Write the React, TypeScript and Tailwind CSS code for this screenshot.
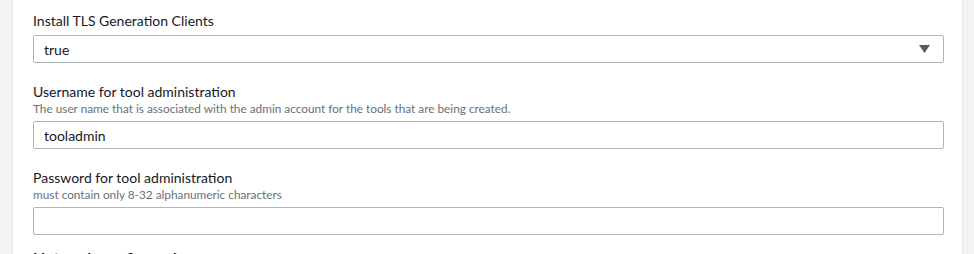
import React from 'react';

const fields = [
    {
        label: 'Username for tool administration',
        description:
            'The user name that is associated with the admin account for the tools that are being created.',
        value: 'tooladmin',
    },
    {
        label: 'Password for tool administration',
        description: 'must contain only 8-32 alphanumeric characters',
        value: '',
    },
];

export default function App() {
    return (
        <div
            className="flex h-[254px] w-full overflow-hidden bg-[#f2f3f3] text-[#16191f]"
            style={{ fontFamily: 'Lato, "Liberation Sans", Arial, sans-serif' }}
        >
            <div className="w-[12px] shrink-0" />
            <div className="flex w-[951px] shrink-0 flex-col border-x border-[#e4e7e7] bg-white pl-[20px] pr-[18px] pt-[12px]">
                <div className="flex flex-col">
                    <label className="text-[14px] leading-[18px]">
                        Install TLS Generation Clients
                    </label>
                    <div className="mt-[5px] flex h-[28px] items-center justify-between rounded-[2px] border border-[#aab7b8] pl-[10px] pr-[13px]">
                        <span className="text-[14px]">true</span>
                        <svg width="11" height="8" viewBox="0 0 11 8">
                            <path d="M0 0 H11 L5.5 8 Z" fill="#545b64" />
                        </svg>
                    </div>
                </div>
                {fields.map(field => (
                    <div key={field.label} className="mt-[20px] flex flex-col">
                        <label className="text-[14px] leading-[18px]">
                            {field.label}
                        </label>
                        <p className="text-[11.8px] leading-[16px] text-[#687078]">
                            {field.description}
                        </p>
                        <div className="mt-[4px] flex h-[28px] items-center rounded-[2px] border border-[#aab7b8] pl-[10px]">
                            <span className="text-[14px]">{field.value}</span>
                        </div>
                    </div>
                ))}
                <h3 className="mt-[13px] text-[16px] font-bold leading-[20px]">
                    Network configuration
                </h3>
            </div>
        </div>
    );
}
